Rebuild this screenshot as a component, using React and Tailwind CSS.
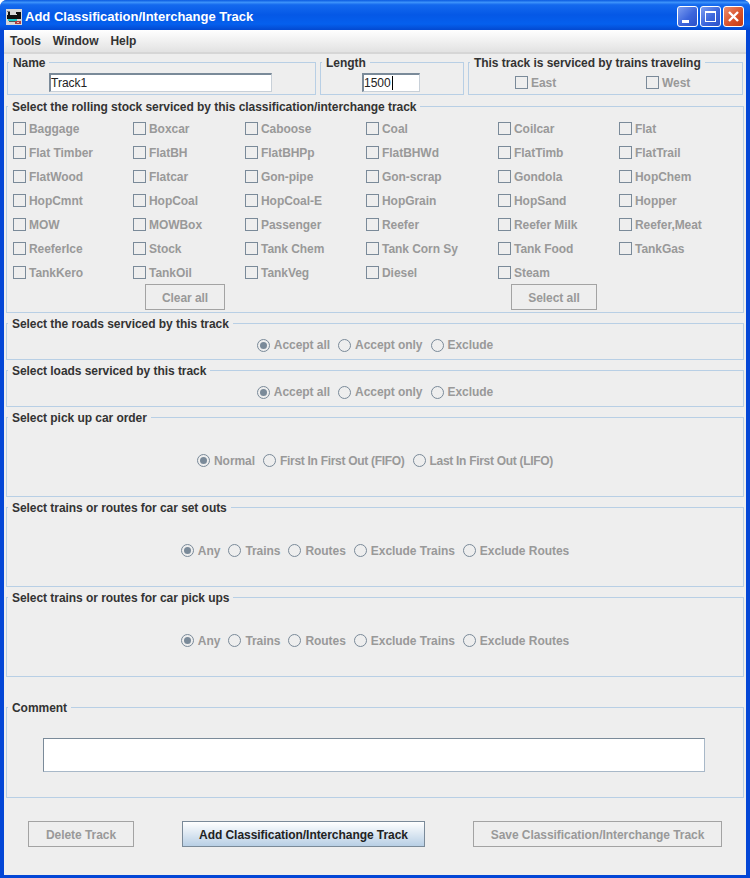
const stock = [
  "Baggage", "Boxcar", "Caboose", "Coal", "Coilcar", "Flat",
  "Flat Timber", "FlatBH", "FlatBHPp", "FlatBHWd", "FlatTimb", "FlatTrail",
  "FlatWood", "Flatcar", "Gon-pipe", "Gon-scrap", "Gondola", "HopChem",
  "HopCmnt", "HopCoal", "HopCoal-E", "HopGrain", "HopSand", "Hopper",
  "MOW", "MOWBox", "Passenger", "Reefer", "Reefer Milk", "Reefer,Meat",
  "ReeferIce", "Stock", "Tank Chem", "Tank Corn Sy", "Tank Food", "TankGas",
  "TankKero", "TankOil", "TankVeg", "Diesel", "Steam",
];

function Group({ title, className = "", children }) {
  return (
    <div className={`relative border border-[#b8cfe5] ${className}`}>
      <span className="absolute left-[1px] top-[-8px] bg-[#eeeeee] px-1 pt-[1px] text-[12px] leading-[14px] font-bold tracking-[-0.05px] whitespace-nowrap text-[#333333]">
        {title}
      </span>
      {children}
    </div>
  );
}

function Check({ label, className = "" }) {
  return (
    <div className={`flex items-center gap-[3px] ${className}`}>
      <span className="h-[13px] w-[13px] shrink-0 border border-[#7a8a99]" />
      <span className="mt-[1px] text-[12px] font-bold tracking-[-0.05px] whitespace-nowrap text-[#999999]">{label}</span>
    </div>
  );
}

function Radio({ label, selected, tight }) {
  return (
    <div className="flex items-center gap-[4px]">
      <span className="flex h-[13px] w-[13px] items-center justify-center rounded-full border border-[#7a8a99]">
        {selected && <span className="h-[7px] w-[7px] rounded-full bg-[#7a8a99]" />}
      </span>
      <span
        className={`text-[12px] font-bold whitespace-nowrap text-[#999999] ${
          tight ? "tracking-[-0.3px]" : "tracking-[-0.05px]"
        }`}
      >
        {label}
      </span>
    </div>
  );
}

function RadioRow({ options, tight }) {
  return (
    <div className="flex h-full items-center justify-center gap-[8px] pt-[7px]">
      {options.map((o, i) => (
        <Radio key={o} label={o} selected={i === 0} tight={tight && i > 0} />
      ))}
    </div>
  );
}

function DisabledButton({ className = "", children }) {
  return (
    <button
      type="button"
      className={`flex items-center justify-center border border-[#a3a3a3] pt-[2px] text-[12px] font-bold tracking-[-0.05px] whitespace-nowrap text-[#999999] ${className}`}
    >
      {children}
    </button>
  );
}

function TrainIcon() {
  return (
    <svg width="16" height="16" viewBox="0 0 16 16" className="shrink-0">
      <rect width="16" height="16" fill="#d8d8d8" />
      <rect x="1" y="2" width="3" height="1" fill="#777777" />
      <rect x="2" y="3" width="2" height="3" fill="#111111" />
      <rect x="10" y="3" width="5" height="2" fill="#111111" />
      <rect x="1" y="6" width="14" height="4" fill="#111111" />
      <rect x="11" y="5" width="4" height="1" fill="#111111" />
      <rect x="2" y="10" width="9" height="2" fill="#19c8c8" />
      <rect x="3" y="12" width="6" height="1" fill="#555555" />
      <rect x="9" y="12" width="6" height="3" fill="#b04040" />
      <rect x="11" y="13" width="2" height="1" fill="#e8c0c0" />
    </svg>
  );
}

function WinButton({ close, children }) {
  return (
    <div
      className={`flex h-[21px] w-[21px] items-center justify-center rounded-[3px] border border-white ${
        close
          ? "bg-[linear-gradient(135deg,#eb8d6f,#d9532c_55%,#c23a12)]"
          : "bg-[linear-gradient(135deg,#7c9df0,#3c66dc_55%,#2b50c8)]"
      }`}
    >
      {children}
    </div>
  );
}

export default function App() {
  return (
    <div className="h-[878px] w-[750px] bg-white font-['Liberation_Sans',Arial,sans-serif]">
      <div className="flex h-full flex-col rounded-t-[7px] bg-[#0346d6] px-[4px] pb-[3px]">
        {/* title bar */}
        <div className="-mx-[4px] flex h-[30px] shrink-0 items-center rounded-t-[7px] bg-[linear-gradient(180deg,#0a5ae0_0%,#3c92fa_8%,#1469ee_16%,#0558e6_50%,#0560ee_80%,#0349d0_100%)] pt-[3px] pr-[6px] pl-[6px]">
          <TrainIcon />
          <span className="ml-[3px] text-[13px] font-bold whitespace-nowrap text-white">
            Add Classification/Interchange Track
          </span>
          <div className="ml-auto flex gap-[2px]">
            <WinButton>
              <span className="mt-[9px] mr-[5px] h-[3px] w-[7px] bg-white" />
            </WinButton>
            <WinButton>
              <span className="h-[11px] w-[11px] border border-t-2 border-white" />
            </WinButton>
            <WinButton close>
              <svg width="13" height="13" viewBox="0 0 13 13">
                <path d="M2 2 L11 11 M11 2 L2 11" stroke="#ffffff" strokeWidth="2.4" />
              </svg>
            </WinButton>
          </div>
        </div>

        {/* menu bar */}
        <div className="flex h-[24px] shrink-0 items-center gap-[12px] border-b-2 border-[#d6d6d6] bg-[linear-gradient(180deg,#ffffff,#e2e2e2)] pl-[6px] text-[12px] font-bold tracking-[-0.05px] text-[#333333]">
          <span>Tools</span>
          <span>Window</span>
          <span>Help</span>
        </div>

        <div className="flex min-h-0 flex-1 flex-col bg-[#eeeeee] pr-[2px] pl-[2px]">
          {/* name / length / direction */}
          <div className="mt-[8px] flex h-[33px] shrink-0 gap-[4px] pl-[1px]">
            <Group title="Name" className="w-[309px]">
              <input
                readOnly
                value="Track1"
                className="mt-[10px] ml-[41px] block h-[19px] w-[223px] border border-t-2 border-l-2 border-[#7a8a99] border-r-[#c8d0d8] border-b-[#c8d0d8] bg-white px-0 text-[12px] text-[#222222]"
              />
            </Group>
            <Group title="Length" className="w-[144px]">
              <div className="mt-[10px] ml-[41px] flex h-[19px] w-[58px] items-center border border-t-2 border-l-2 border-[#7a8a99] border-r-[#c8d0d8] border-b-[#c8d0d8] bg-white px-0 text-[12px] text-[#222222]">
                1500
                <span className="ml-[1px] h-[14px] w-[1px] bg-black" />
              </div>
            </Group>
            <Group title="This track is serviced by trains traveling" className="w-[275px]">
              <div className="mt-[12px] flex">
                <Check label="East" className="ml-[46px] h-[14px] w-[131px]" />
                <Check label="West" className="h-[14px]" />
              </div>
            </Group>
          </div>

          {/* rolling stock */}
          <Group
            title="Select the rolling stock serviced by this classification/interchange track"
            className="mt-[11px] h-[207px] shrink-0"
          >
            <div className="grid grid-cols-[120px_112px_121px_132px_121px_1fr] pt-[9px] pl-[6px]">
              {stock.map((s) => (
                <Check key={s} label={s} className="h-[24px]" />
              ))}
            </div>
            <div className="flex">
              <DisabledButton className="ml-[138px] h-[26px] w-[80px]">Clear all</DisabledButton>
              <DisabledButton className="ml-[286px] h-[26px] w-[86px]">Select all</DisabledButton>
            </div>
          </Group>

          <Group title="Select the roads serviced by this track" className="mt-[10px] h-[37px] shrink-0">
            <RadioRow options={["Accept all", "Accept only", "Exclude"]} />
          </Group>
          <Group title="Select loads serviced by this track" className="mt-[10px] h-[37px] shrink-0">
            <RadioRow options={["Accept all", "Accept only", "Exclude"]} />
          </Group>
          <Group title="Select pick up car order" className="mt-[10px] h-[80px] shrink-0">
            <RadioRow tight options={["Normal", "First In First Out (FIFO)", "Last In First Out (LIFO)"]} />
          </Group>
          <Group title="Select trains or routes for car set outs" className="mt-[10px] h-[80px] shrink-0">
            <RadioRow options={["Any", "Trains", "Routes", "Exclude Trains", "Exclude Routes"]} />
          </Group>
          <Group title="Select trains or routes for car pick ups" className="mt-[10px] h-[80px] shrink-0">
            <RadioRow options={["Any", "Trains", "Routes", "Exclude Trains", "Exclude Routes"]} />
          </Group>

          <Group title="Comment" className="mt-[30px] h-[91px] shrink-0">
            <div className="mt-[30px] ml-[36px] h-[34px] w-[662px] border border-[#7a8a99] border-r-[#a8b8c8] border-b-[#a8b8c8] bg-white" />
          </Group>

          {/* bottom buttons */}
          <div className="mt-[23px] flex pl-[22px]">
            <DisabledButton className="h-[26px] w-[106px]">Delete Track</DisabledButton>
            <button
              type="button"
              className="ml-[48px] h-[26px] w-[243px] border border-[#7a8a99] bg-[linear-gradient(180deg,#ffffff,#b8cfe5)] pt-[2px] text-[12px] font-bold tracking-[-0.05px] whitespace-nowrap text-[#222222]"
            >
              Add Classification/Interchange Track
            </button>
            <DisabledButton className="ml-[48px] h-[26px] w-[249px]">Save Classification/Interchange Track</DisabledButton>
          </div>
        </div>
      </div>
    </div>
  );
}
